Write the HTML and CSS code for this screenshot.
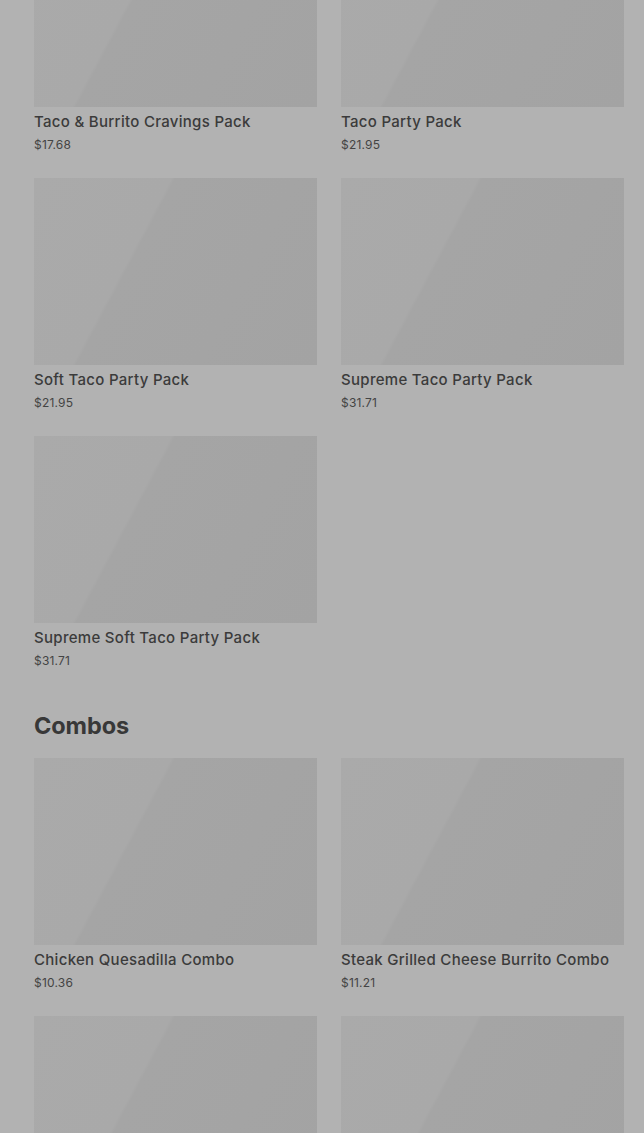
FILE: index.html
```html
<!DOCTYPE html>
<html lang="en">
<head>
<meta charset="utf-8">
<title>Menu</title>
<link rel="stylesheet" href="styles.css">
</head>
<body>
<main class="page">
  <section class="section section-first">
    <div class="grid">
      <article class="card"><div class="thumb"></div><h3 class="name">Taco &amp; Burrito Cravings Pack</h3><p class="price">$17.68</p></article>
      <article class="card"><div class="thumb"></div><h3 class="name">Taco Party Pack</h3><p class="price">$21.95</p></article>
      <article class="card"><div class="thumb"></div><h3 class="name">Soft Taco Party Pack</h3><p class="price">$21.95</p></article>
      <article class="card"><div class="thumb"></div><h3 class="name">Supreme Taco Party Pack</h3><p class="price">$31.71</p></article>
      <article class="card"><div class="thumb"></div><h3 class="name">Supreme Soft Taco Party Pack</h3><p class="price">$31.71</p></article>
    </div>
  </section>
  <section class="section">
    <h2 class="heading">Combos</h2>
    <div class="grid">
      <article class="card"><div class="thumb"></div><h3 class="name">Chicken Quesadilla Combo</h3><p class="price">$10.36</p></article>
      <article class="card"><div class="thumb"></div><h3 class="name">Steak Grilled Cheese Burrito Combo</h3><p class="price">$11.21</p></article>
      <article class="card"><div class="thumb"></div><h3 class="name">&nbsp;</h3><p class="price">&nbsp;</p></article>
      <article class="card"><div class="thumb"></div><h3 class="name">&nbsp;</h3><p class="price">&nbsp;</p></article>
    </div>
  </section>
</main>
</body>
</html>
```
FILE: styles.css
```css
html, body {
  margin: 0;
  padding: 0;
  background: #b2b2b2;
  overflow: hidden;
  height: 1133px;
}
body {
  font-family: Inter, "Noto Sans", "Liberation Sans", sans-serif;
  color: #3a3a3a;
}
.page {
  padding: 0 20px 0 34px;
  margin-top: -80px;
}
.grid {
  display: grid;
  grid-template-columns: 283px 283px;
  column-gap: 24px;
  row-gap: 24px;
}
.card {
  margin: 0;
}
.thumb {
  height: 187px;
  background: linear-gradient(118deg, #aaaaaa 0%, #a9a9a9 36%, #a5a5a5 37%, #a3a3a3 100%);
}
.name {
  margin: 5px 0 0;
  font-size: 15px;
  line-height: 20px;
  font-weight: 500;
  letter-spacing: 0.3px;
  color: #3b3b3b;
  white-space: nowrap;
}
.price {
  margin: 4px 0 0;
  font-size: 12px;
  line-height: 18px;
  font-weight: 400;
  letter-spacing: 0.2px;
  color: #444444;
}
.heading {
  margin: 42px 0 18px;
  font-size: 23.5px;
  line-height: 28px;
  font-weight: 700;
  color: #383838;
  letter-spacing: -0.1px;
}
```
